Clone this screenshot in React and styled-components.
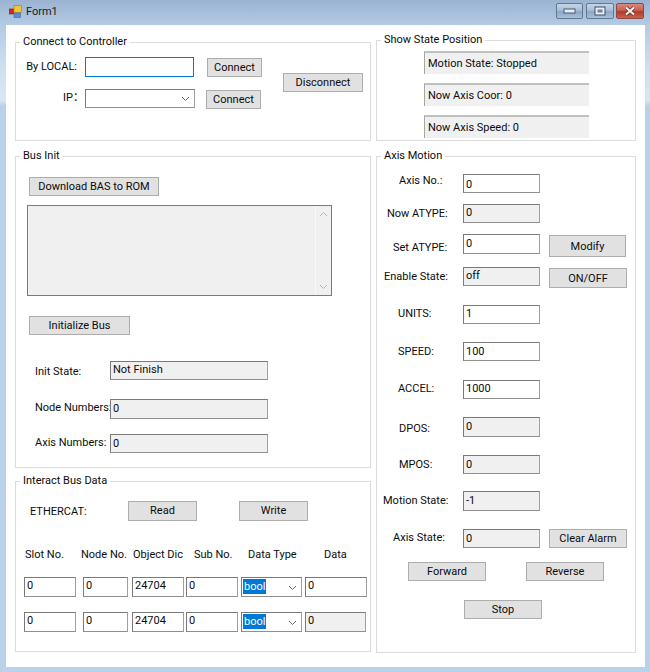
import React from "react";
import styled, { createGlobalStyle } from "styled-components";

const Global = createGlobalStyle`
  html, body { margin: 0; padding: 0; background: #b9d1ea; }
  * { box-sizing: border-box; }
`;

const Window = styled.div`
  width: 650px; height: 672px; overflow: hidden;
  display: flex; flex-direction: column;
  background: linear-gradient(180deg, #99b3d1 0, #b3cae4 24px, #cfe0f1 70px, #d9e7f5 100px, #b9d2ea 106px, #b9d2ea 100%);
  font-family: Roboto, "Noto Sans", "Noto Sans CJK SC", sans-serif;
  font-size: 11px; color: #0c0c0c; line-height: 16px;
`;
const TitleBar = styled.div`
  height: 25px; flex: none; display: flex; align-items: center; padding: 0 6px 0 9px;
`;
const Title = styled.span`
  margin: -2px 0 0 4px; font-size: 11px; color: #1a1a1a; flex: 1;
`;
const WinButton = styled.div`
  width: ${p => p.$w}px; height: 16px; margin-left: ${p => p.$ml}px; margin-top: -3px;
  display: flex; align-items: center; justify-content: center;
  border: 1px solid ${p => p.$close ? "#8d4a42" : "#62788f"}; border-radius: 2px;
  background: ${p => p.$close
    ? "linear-gradient(180deg,#d98a7e 0,#c9604f 45%,#b23a28 55%,#c8624e 100%)"
    : "linear-gradient(180deg,#c4d5e8 0,#a8bfd8 45%,#8ca8c8 55%,#a6c0dc 100%)"};
`;
const Client = styled.div`
  margin: 0 5px 0 6px; height: 642px; flex: none; background: #fff;
  display: flex; padding-left: 9px; gap: 5px;
`;
const Column = styled.div`
  width: ${p => p.$w}px; display: flex; flex-direction: column;
`;
const Group = styled.section`
  position: relative; height: ${p => p.$h}px; margin-top: ${p => p.$mt}px;
  border: 1px solid #dcdcdc; flex: none;
`;
const GroupRow = styled(Group)`
  display: flex; align-items: flex-start;
`;
const Legend = styled.span`
  position: absolute; left: 4px; top: -9px; padding: 0 3px; background: #fff;
  white-space: nowrap;
`;
const Stack = styled.div`
  display: flex; flex-direction: column;
`;
const Row = styled.div`
  display: flex; align-items: flex-start; height: ${p => p.$h || 20}px;
  margin-top: ${p => p.$mt || 0}px; padding-left: ${p => p.$pl || 0}px;
`;
const Label = styled.span`
  width: ${p => p.$w}px; flex: none; white-space: nowrap; line-height: 18px;
  padding-left: ${p => p.$pl || 0}px; margin-top: ${p => p.$mt ?? 2}px;
  text-align: ${p => p.$right ? "right" : "left"};
`;
const Field = styled.div`
  width: ${p => p.$w}px; height: ${p => p.$h || 19}px; flex: none; line-height: 16px;
  margin-left: ${p => p.$ml || 0}px; padding: ${p => p.$pt ?? 1}px 0 0 2px;
  background: ${p => p.$off ? "#f0f0f0" : "#fff"};
  border: 1px solid ${p => p.$focus ? "#0078d7" : "#7a7a7a"};
  border-bottom-color: ${p => p.$focus ? "#0078d7" : "#8f8f8f"};
  border-right-color: ${p => p.$focus ? "#0078d7" : "#a0a0a0"};
  white-space: nowrap; overflow: hidden;
`;
const SelectBox = styled(Field)`
  display: flex; align-items: flex-start; justify-content: space-between;
  padding: 1px 4px 0 1px;
`;
const Selected = styled.span`
  background: #0078d7; color: #fff; padding: 0 1px; height: 15px; line-height: 15px; width: 23px;
`;
const Button = styled.button`
  width: ${p => p.$w}px; height: ${p => p.$h || 19}px; flex: none;
  padding: ${p => p.$pt ?? 1}px 0 0;
  margin-left: ${p => p.$ml || 0}px; margin-top: ${p => p.$mt || 0}px;
  background: #e1e1e1; border: 1px solid #adadad; border-radius: 0;
  font: inherit; color: #0c0c0c; white-space: nowrap;
`;
const StatusStack = styled.div`
  display: flex; flex-direction: column; gap: 9px; padding: 10px 0 0 47px;
`;
const Status = styled.div`
  width: 165px; height: 23px; background: #f0f0f0; padding: 2px 0 0 3px; line-height: 18px;
  border-top: 2px solid #c0c0c0; border-left: 1px solid #a5a5a5;
`;
const LogBox = styled.div`
  width: 305px; height: 91px; margin: 9px 0 0 11px; background: #f0f0f0;
  border: 1px solid #7a7a7a; display: flex; justify-content: flex-end;
`;
const ScrollBar = styled.div`
  width: 16px; border-left: 1px solid #f8f8f8; display: flex; flex-direction: column;
  justify-content: space-between; align-items: center; padding: 5px 0;
`;
const Headers = styled.div`
  display: grid; grid-template-columns: 56px 52px 61px 54px 76px auto;
  margin-top: 25px; padding-left: 9px; height: 16px; line-height: 18px; white-space: nowrap;
`;

const Chevron = ({ up, color = "#666" }) => (
  <svg width="9" height="6" viewBox="0 0 9 6" style={{ flex: "none" }}>
    <path d={up ? "M1 5L4.5 1.5L8 5" : "M1 1L4.5 4.5L8 1"} fill="none" stroke={color} strokeWidth="1" />
  </svg>
);

const AppIcon = () => (
  <svg width="13" height="13" viewBox="0 0 13 13" style={{ flex: "none", marginTop: "-3px" }}>
    <rect x="0.5" y="4" width="4" height="5" fill="#d02a1c" stroke="#7a1a12" strokeWidth="0.6" />
    <rect x="5" y="0.5" width="7.5" height="7" fill="#f3c33c" stroke="#a67c1c" strokeWidth="0.6" />
    <rect x="5" y="8" width="6.5" height="4.5" fill="#5a8fd8" stroke="#3a62a0" strokeWidth="0.6" />
  </svg>
);

const BusRow = ({ last }) => (
  <Row $mt={15} $pl={8}>
    <Field $w={52} $h={20} $pt={0}>0</Field>
    <Field $w={45} $h={20} $ml={7} $pt={0}>0</Field>
    <Field $w={52} $h={20} $ml={4} $pt={0}>24704</Field>
    <Field $w={52} $h={20} $ml={2} $pt={0}>0</Field>
    <SelectBox as="div" $w={61} $h={20} $ml={3}>
      <Selected>bool</Selected>
      <span style={{ alignSelf: "center" }}><Chevron /></span>
    </SelectBox>
    <Field $w={last ? 61 : 62} $h={20} $ml={3} $off={last} $pt={0}>0</Field>
  </Row>
);

const axisRows = [
  { label: "Axis No.:", pl: 22, lmt: -2, mt: 17, h: 19, val: "0", pt: 2 },
  { label: "Now ATYPE:", pl: 10, lmt: 1, mt: 11, h: 19, val: "0", off: true, pt: 0 },
  { label: "Set ATYPE:", pl: 16, lmt: 5, mt: 11, h: 20, val: "0", pt: 1,
    btn: { text: "Modify", w: 77, h: 22, mt: 1 } },
  { label: "Enable State:", pl: 7, lmt: 1, mt: 13, h: 19, val: "off", off: true, pt: 0,
    btn: { text: "ON/OFF", w: 78, h: 20, mt: 1 } },
  { label: "UNITS:", pl: 21, lmt: 0, mt: 19, h: 19, val: "1", pt: 0 },
  { label: "SPEED:", pl: 21, lmt: 1, mt: 18, h: 19, val: "100", pt: 1 },
  { label: "ACCEL:", pl: 21, lmt: 0, mt: 19, h: 19, val: "1000", pt: 0 },
  { label: "DPOS:", pl: 22, lmt: 3, mt: 18, h: 20, val: "0", off: true, pt: 1 },
  { label: "MPOS:", pl: 22, lmt: 1, mt: 18, h: 19, val: "0", off: true, pt: 1 },
  { label: "Motion State:", pl: 6, lmt: 1, mt: 17, h: 20, val: "-1", off: true, pt: 1 },
  { label: "Axis State:", pl: 16, lmt: 0, mt: 18, h: 19, val: "0", off: true, pt: 1,
    btn: { text: "Clear Alarm", w: 78, h: 19, mt: 0 } },
];

export default function App() {
  return (
    <Window>
      <Global />
      <TitleBar>
        <AppIcon />
        <Title>Form1</Title>
        <WinButton $w={27} $ml={0}>
          <svg width="13" height="6" viewBox="0 0 13 6"><rect x="1" y="1" width="11" height="4" fill="#e8eef5" stroke="#4a5a6e" /></svg>
        </WinButton>
        <WinButton $w={28} $ml={3}>
          <svg width="12" height="10" viewBox="0 0 12 10"><rect x="1" y="1" width="10" height="8" fill="#e8eef5" stroke="#3f4f63" /><rect x="3.5" y="3.5" width="5" height="3" fill="#6d83a0" /></svg>
        </WinButton>
        <WinButton $w={28} $ml={2} $close>
          <svg width="14" height="10" viewBox="0 0 14 10"><path d="M3 1.5L11 8.5M11 1.5L3 8.5" stroke="#5a2a24" strokeWidth="3.4" /><path d="M3 1.5L11 8.5M11 1.5L3 8.5" stroke="#f4f0ee" strokeWidth="2.2" /></svg>
        </WinButton>
      </TitleBar>
      <Client>
        <Column $w={356}>
          <GroupRow $h={99} $mt={17}>
            <Legend>Connect to Controller</Legend>
            <Stack>
              <Row $mt={14}>
                <Label $w={61} $right $mt={1}>By LOCAL:</Label>
                <Field $w={109} $h={20} $ml={8} $focus />
                <Button $w={55} $ml={13} $mt={1}>Connect</Button>
              </Row>
              <Row $mt={12}>
                <Label $w={68} $right $mt={0}>IP：</Label>
                <SelectBox $w={110} $ml={1}>
                  <span />
                  <span style={{ alignSelf: "center" }}><Chevron /></span>
                </SelectBox>
                <Button $w={55} $ml={11} $mt={1}>Connect</Button>
              </Row>
            </Stack>
            <Button $w={80} $ml={21} $mt={30}>Disconnect</Button>
          </GroupRow>

          <Group $h={312} $mt={15}>
            <Legend>Bus Init</Legend>
            <Row $mt={20} $pl={13} $h={19}>
              <Button $w={130}>Download BAS to ROM</Button>
            </Row>
            <LogBox>
              <ScrollBar>
                <Chevron up color="#b5b5b5" />
                <Chevron color="#b5b5b5" />
              </ScrollBar>
            </LogBox>
            <Row $mt={20} $pl={13} $h={19}>
              <Button $w={101}>Initialize Bus</Button>
            </Row>
            <Row $mt={26} $h={19}>
              <Label $w={94} $pl={19} $mt={2}>Init State:</Label>
              <Field $w={158} $off $pt={0}>Not Finish</Field>
            </Row>
            <Row $mt={19} $h={20}>
              <Label $w={94} $pl={19} $mt={0}>Node Numbers:</Label>
              <Field $w={158} $h={20} $off>0</Field>
            </Row>
            <Row $mt={15} $h={19}>
              <Label $w={94} $pl={19} $mt={0}>Axis Numbers:</Label>
              <Field $w={158} $off>0</Field>
            </Row>
          </Group>

          <Group $h={171} $mt={13}>
            <Legend>Interact Bus Data</Legend>
            <Row $mt={19} $pl={14}>
              <Label $w={98} $mt={2}>ETHERCAT:</Label>
              <Button $w={69} $h={20} $pt={0}>Read</Button>
              <Button $w={69} $h={20} $ml={42} $pt={0}>Write</Button>
            </Row>
            <Headers>
              <span>Slot No.</span>
              <span>Node No.</span>
              <span>Object Dic</span>
              <span>Sub No.</span>
              <span>Data Type</span>
              <span>Data</span>
            </Headers>
            <BusRow />
            <BusRow last />
          </Group>
        </Column>

        <Column $w={260}>
          <Group $h={101} $mt={15}>
            <Legend>Show State Position</Legend>
            <StatusStack>
              <Status>Motion State: Stopped</Status>
              <Status>Now Axis Coor: 0</Status>
              <Status>Now Axis Speed: 0</Status>
            </StatusStack>
          </Group>

          <Group $h={497} $mt={15}>
            <Legend>Axis Motion</Legend>
            {axisRows.map(r => (
              <Row key={r.label} $mt={r.mt} $h={r.h}>
                <Label $w={86} $pl={r.pl} $mt={r.lmt}>{r.label}</Label>
                <Field $w={77} $h={r.h} $off={r.off} $pt={r.pt}>{r.val}</Field>
                {r.btn && <Button $w={r.btn.w} $h={r.btn.h} $ml={9} $mt={r.btn.mt}>{r.btn.text}</Button>}
              </Row>
            ))}
            <Row $mt={14} $pl={31} $h={19}>
              <Button $w={78}>Forward</Button>
              <Button $w={78} $ml={40}>Reverse</Button>
            </Row>
            <Row $mt={19} $pl={87} $h={19}>
              <Button $w={78}>Stop</Button>
            </Row>
          </Group>
        </Column>
      </Client>
    </Window>
  );
}
